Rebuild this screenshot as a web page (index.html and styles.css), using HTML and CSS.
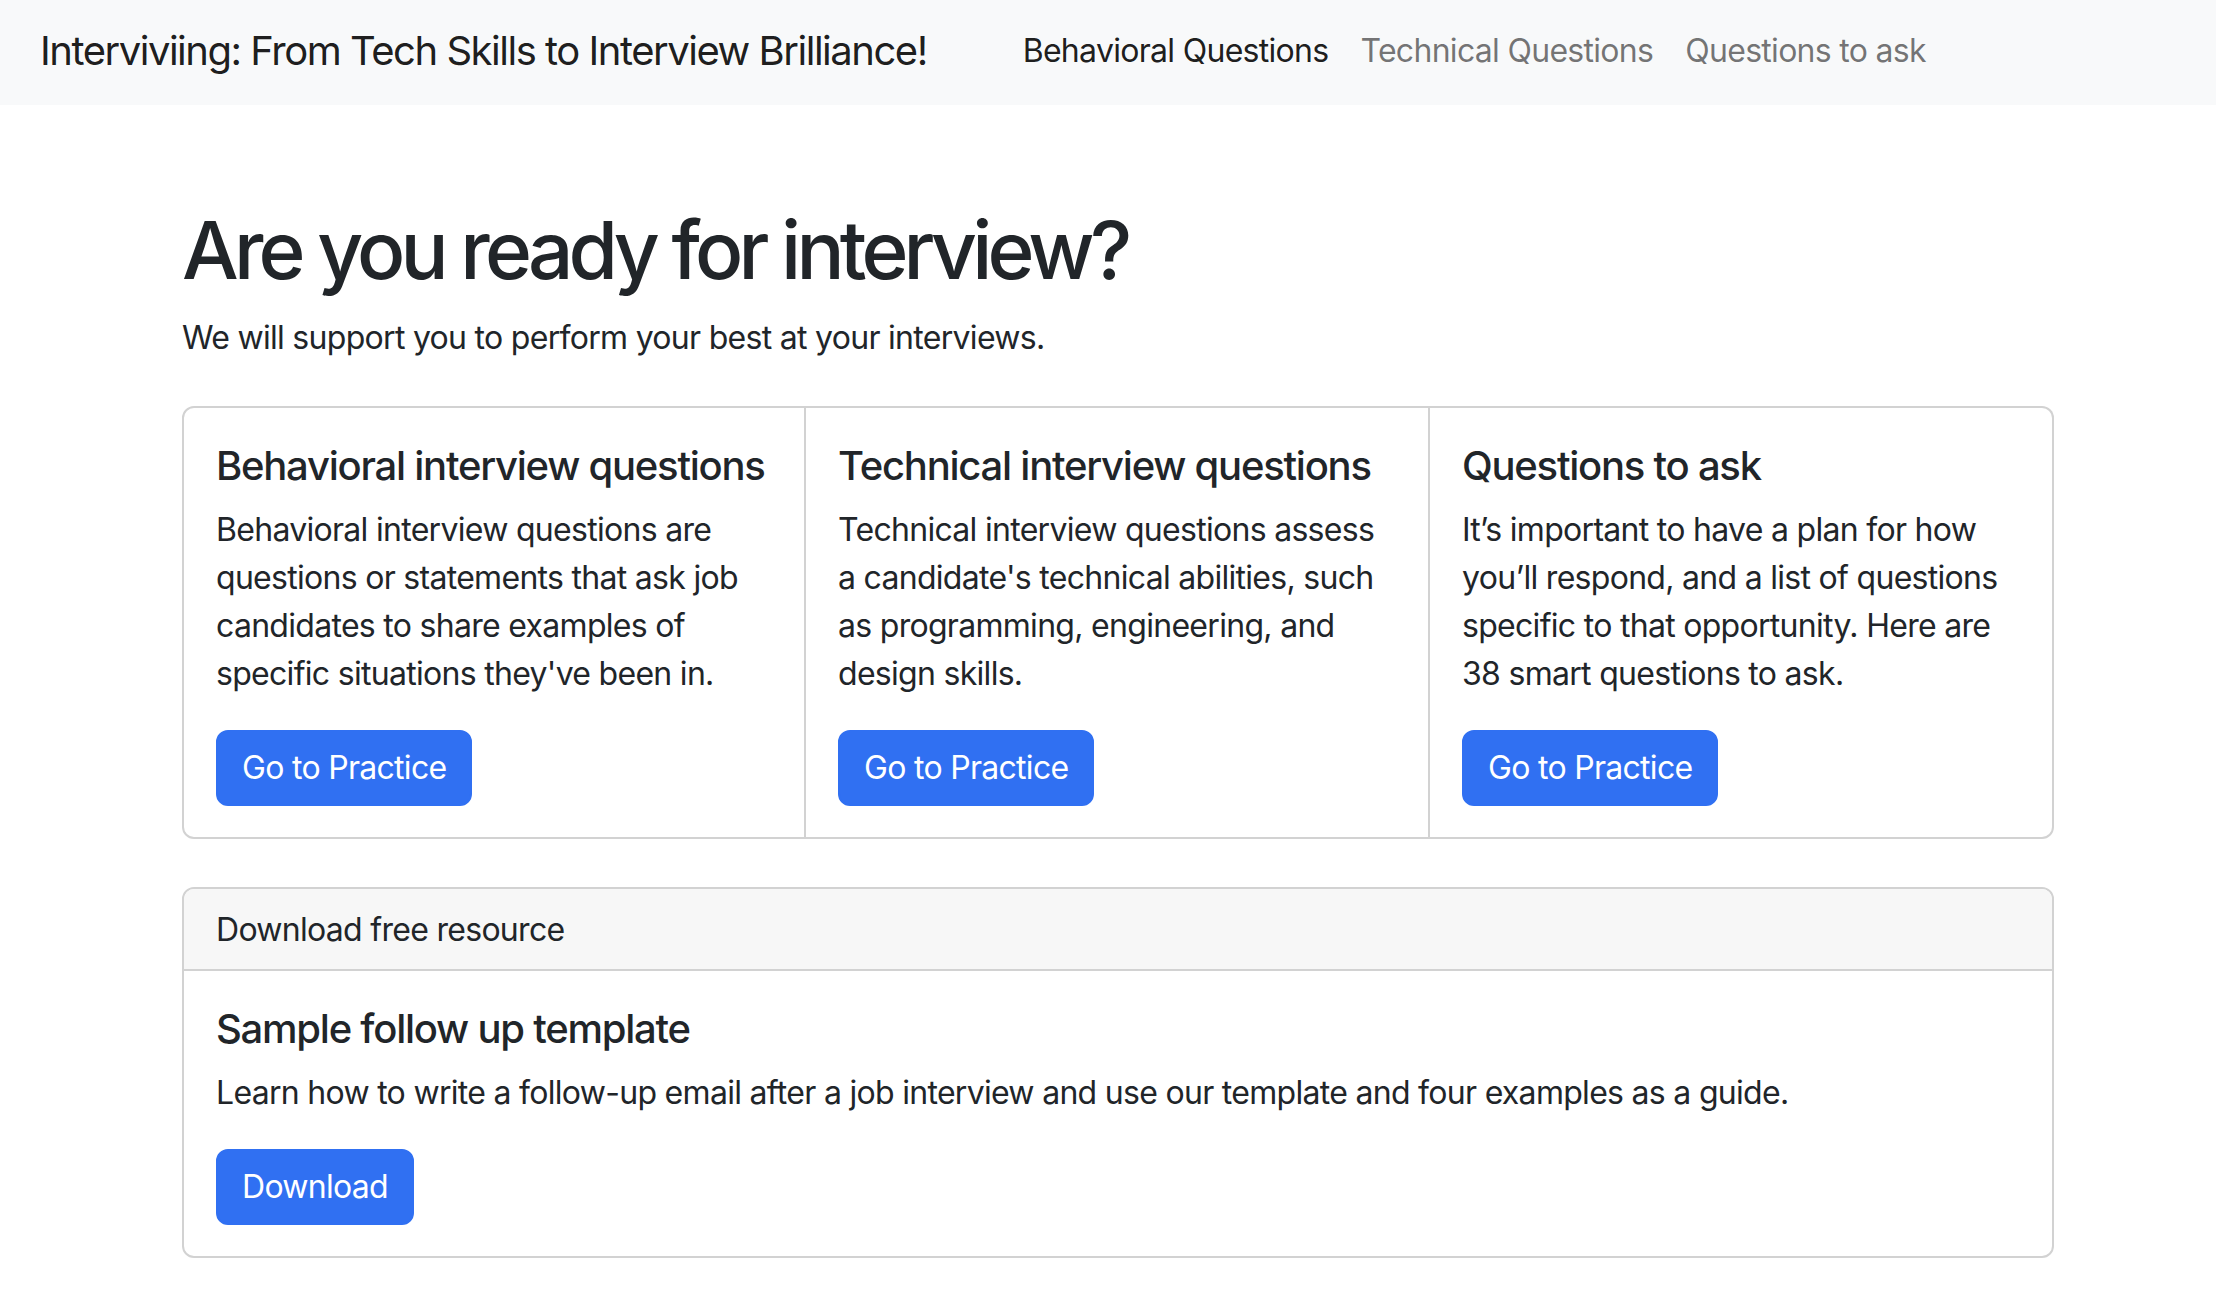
FILE: index.html
```html
<!DOCTYPE html>
<html lang="en">
<head>
<meta charset="utf-8">
<title>Interviviing</title>
<link rel="stylesheet" href="styles.css">
</head>
<body>
<nav class="navbar">
  <a class="brand" href="#">Interviviing: From Tech Skills to Interview Brilliance!</a>
  <ul class="nav-links">
    <li><a class="nav-link active" href="#">Behavioral Questions</a></li>
    <li><a class="nav-link" href="#">Technical Questions</a></li>
    <li><a class="nav-link" href="#">Questions to ask</a></li>
  </ul>
</nav>
<main class="container">
  <h1 class="title">Are you ready for interview?</h1>
  <p class="lead">We will support you to perform your best at your interviews.</p>

  <div class="card-group">
    <div class="card">
      <div class="card-body">
        <h5 class="card-title">Behavioral interview questions</h5>
        <p class="card-text">Behavioral interview questions are questions or statements that ask job candidates to share examples of specific situations they've been in.</p>
        <a href="#" class="btn">Go to Practice</a>
      </div>
    </div>
    <div class="card">
      <div class="card-body">
        <h5 class="card-title">Technical interview questions</h5>
        <p class="card-text">Technical interview questions assess a candidate's technical abilities, such as programming, engineering, and design skills.</p>
        <a href="#" class="btn">Go to Practice</a>
      </div>
    </div>
    <div class="card">
      <div class="card-body">
        <h5 class="card-title">Questions to ask</h5>
        <p class="card-text">It’s important to have a plan for how you’ll respond, and a list of questions specific to that opportunity. Here are 38 smart questions to ask.</p>
        <a href="#" class="btn">Go to Practice</a>
      </div>
    </div>
  </div>

  <div class="card resource">
    <div class="card-header">Download free resource</div>
    <div class="card-body">
      <h5 class="card-title">Sample follow up template</h5>
      <p class="card-text">Learn how to write a follow-up email after a job interview and use our template and four examples as a guide.</p>
      <a href="#" class="btn">Download</a>
    </div>
  </div>
</main>
</body>
</html>
```
FILE: styles.css
```css
* { box-sizing: border-box; }
html, body { margin: 0; padding: 0; }
body {
  font-family: Inter, "Noto Sans", "Liberation Sans", sans-serif;
  font-size: 32px;
  line-height: 1.5;
  letter-spacing: -0.022em;
  color: #212529;
  background: #fff;
}
a { text-decoration: none; }

.navbar {
  height: 105px;
  background: #f8f9fa;
  display: flex;
  align-items: center;
  padding-left: 40px;
  padding-bottom: 3px;
}
.brand {
  font-size: 40px;
  line-height: 60px;
  letter-spacing: -0.037em;
  color: rgba(0,0,0,.9);
  margin-right: 80px;
}
.nav-links {
  list-style: none;
  margin: 0;
  padding: 0;
  display: flex;
}
.nav-link {
  display: block;
  padding: 8px 16px;
  color: rgba(0,0,0,.55);
  font-size: 32px;
  line-height: 48px;
}
.nav-link.active { color: rgba(0,0,0,.9); }

.container {
  width: 1872px;
  margin-left: 182px;
  padding-top: 97px;
}
.title {
  margin: 0 0 16px;
  font-size: 80px;
  font-weight: 500;
  line-height: 1.2;
  letter-spacing: -0.06em;
}
.lead {
  margin: 0 0 44px;
}

.card-group {
  display: grid;
  grid-template-columns: repeat(3, 1fr);
}
.card {
  border: 2px solid #d2d2d2;
  background: #fff;
}
.card-group .card + .card { border-left: 0; }
.card-group .card:first-child { border-radius: 12px 0 0 12px; }
.card-group .card:last-child { border-radius: 0 12px 12px 0; }
.card-body { padding: 34px 32px 31px; }
.card-title {
  margin: 0 0 16px;
  font-size: 40px;
  font-weight: 500;
  line-height: 1.2;
  letter-spacing: -0.031em;
}
.card-text { margin: 0 0 32px; }
.btn {
  display: inline-block;
  padding: 12px 24px;
  border: 2px solid #3070f2;
  border-radius: 12px;
  background: #3070f2;
  color: #fff;
  font-size: 32px;
  line-height: 48px;
}

.resource {
  margin-top: 48px;
  border-radius: 12px;
  overflow: hidden;
}
.card-header {
  padding: 17px 32px 15px;
  background: #f7f7f7;
  border-bottom: 2px solid #d2d2d2;
}
```
